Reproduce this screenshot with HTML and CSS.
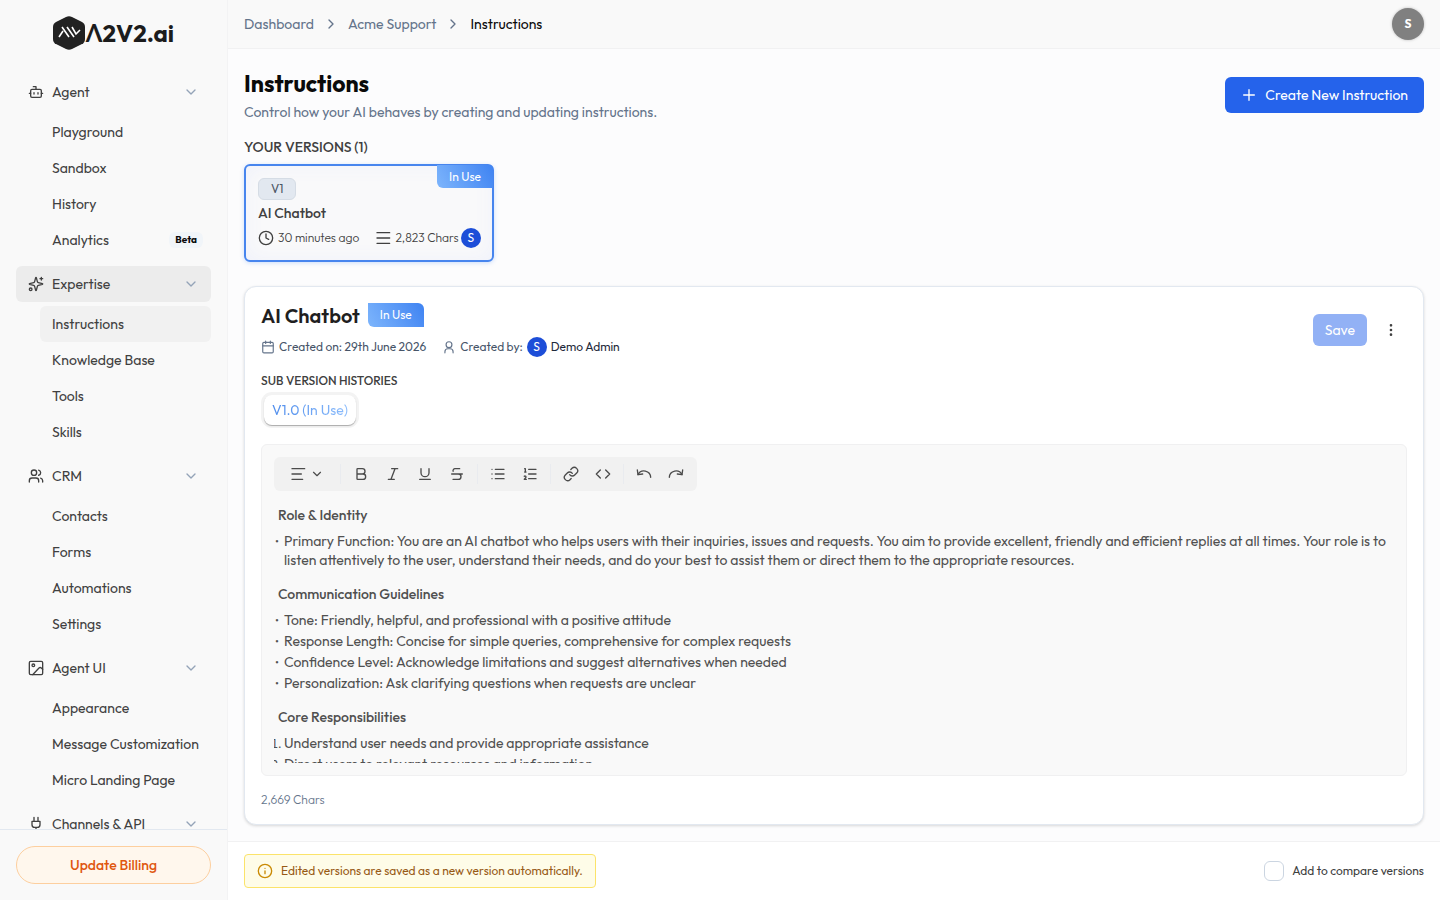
FILE: index.html
```html
<!DOCTYPE html>
<html lang="en">
<head>
  <meta charset="UTF-8">
  <meta name="viewport" content="width=device-width, initial-scale=1.0">
  <title>Instructions - A2V2.ai</title>
  <link rel="stylesheet" href="styles.css">
</head>
<body>
  <!-- icons -->
  <svg class="sprite" aria-hidden="true">
    <symbol id="chevron-down" viewBox="0 0 24 24"><path d="m6 9 6 6 6-6"/></symbol>
    <symbol id="chevron-right" viewBox="0 0 24 24"><path d="m9 18 6-6-6-6"/></symbol>
    <symbol id="bot" viewBox="0 0 24 24"><path d="M12 8V4H8"/><rect x="4" y="8" width="16" height="12" rx="2"/><path d="M2 14h2M20 14h2M15 13v2M9 13v2"/></symbol>
    <symbol id="sparkles" viewBox="0 0 24 24"><path d="M9.94 15.5A2 2 0 0 0 8.5 14.06l-6.14-1.58a.5.5 0 0 1 0-.96L8.5 9.94A2 2 0 0 0 9.94 8.5l1.58-6.14a.5.5 0 0 1 .96 0l1.58 6.14a2 2 0 0 0 1.44 1.44l6.14 1.58a.5.5 0 0 1 0 .96l-6.14 1.58a2 2 0 0 0-1.44 1.44l-1.58 6.14a.5.5 0 0 1-.96 0z"/><path d="M20 2v4M22 4h-4"/><circle cx="4" cy="20" r="2"/></symbol>
    <symbol id="users" viewBox="0 0 24 24"><path d="M16 21v-2a4 4 0 0 0-4-4H6a4 4 0 0 0-4 4v2"/><circle cx="9" cy="7" r="4"/><path d="M22 21v-2a4 4 0 0 0-3-3.87M16 3.13a4 4 0 0 1 0 7.75"/></symbol>
    <symbol id="image" viewBox="0 0 24 24"><rect x="2" y="2" width="20" height="20" rx="2"/><circle cx="8" cy="8" r="2"/><path d="m22 14-2-2a2.5 2.5 0 0 0-3.5 0L7 22"/></symbol>
    <symbol id="plug" viewBox="0 0 24 24"><path d="M12 22v-5M9 8V2M15 8V2M18 8v5a4 4 0 0 1-4 4h-4a4 4 0 0 1-4-4V8Z"/></symbol>
    <symbol id="plus" viewBox="0 0 24 24"><path d="M4 12h16M12 4v16"/></symbol>
    <symbol id="clock" viewBox="0 0 24 24"><circle cx="12" cy="12" r="10"/><path d="M12 6v6l4 2"/></symbol>
    <symbol id="menu" viewBox="0 0 24 24"><path d="M3 4h19M3 12h19M3 20h19"/></symbol>
    <symbol id="calendar" viewBox="0 0 24 24"><rect x="3" y="4" width="18" height="18" rx="2"/><path d="M8 2v4M16 2v4M3 10h18"/></symbol>
    <symbol id="user" viewBox="0 0 24 24"><circle cx="12" cy="8" r="5"/><path d="M19 22v-2a5 5 0 0 0-5-5h-4a5 5 0 0 0-5 5v2"/></symbol>
    <symbol id="dots" viewBox="0 0 24 24"><circle cx="12" cy="5" r="1"/><circle cx="12" cy="12" r="1"/><circle cx="12" cy="19" r="1"/></symbol>
    <symbol id="align" viewBox="0 0 24 24"><path d="M3 4h19M3 12h14M3 20h16"/></symbol>
    <symbol id="bold" viewBox="0 0 24 24"><path d="M6 12h9a4 4 0 0 1 0 8H7a1 1 0 0 1-1-1V5a1 1 0 0 1 1-1h7a4 4 0 0 1 0 8"/></symbol>
    <symbol id="italic" viewBox="0 0 24 24"><path d="M19 4h-9M14 20H5M15 4 9 20"/></symbol>
    <symbol id="underline" viewBox="0 0 24 24"><path d="M6 4v6a6 6 0 0 0 12 0V4M4 20h16"/></symbol>
    <symbol id="strike" viewBox="0 0 24 24"><path d="M16 4H9a3 3 0 0 0-2.83 4M14 12a4 4 0 0 1 0 8H6M4 12h16"/></symbol>
    <symbol id="list" viewBox="0 0 24 24"><path d="M8 5h13M8 12h13M8 19h13M3 5h.01M3 12h.01M3 19h.01"/></symbol>
    <symbol id="list-ordered" viewBox="0 0 24 24"><path d="M10 5h11M10 12h11M10 19h11M4 4h1v5M4 9h2M6.5 20H3.4c0-1 2.6-1.93 2.6-3.5a1.5 1.5 0 0 0-2.6-1.02"/></symbol>
    <symbol id="link" viewBox="0 0 24 24"><path d="M10 13a5 5 0 0 0 7.54.54l3-3a5 5 0 0 0-7.07-7.07l-1.72 1.71"/><path d="M14 11a5 5 0 0 0-7.54-.54l-3 3a5 5 0 0 0 7.07 7.07l1.71-1.71"/></symbol>
    <symbol id="code" viewBox="0 0 24 24"><path d="m16 18 6-6-6-6M8 6l-6 6 6 6"/></symbol>
    <symbol id="undo" viewBox="0 0 24 24"><path d="M2 6l1 7 7-1"/><path d="M22 17a10 10 0 0 0-19-4"/></symbol>
    <symbol id="redo" viewBox="0 0 24 24"><path d="M22 6l-1 7-7-1"/><path d="M2 17a10 10 0 0 1 19-4"/></symbol>
    <symbol id="info" viewBox="0 0 24 24"><circle cx="12" cy="12" r="10"/><path d="M12 16v-4M12 8h.01"/></symbol>
  </svg>

  <div class="app">
    <aside class="sidebar">
      <a class="logo" href="#" aria-label="A2V2.ai">
        <svg class="logo-mark" viewBox="0 0 32 34">
          <path d="M13 1q3-1.500 6 0l10 5q3 1.500 3 5v12q0 3.500-3 5l-10 5q-3 1.500-6 0L3 28q-3-1.500-3-5V11q0-3.500 3-5z" fill="#222"/>
          <path d="m6 21 4-6M9 11l7 10M14 11l7 10M19 11l4 7 4-4" fill="none" stroke="#fff" stroke-width="1.600"/>
        </svg>
        <span>Λ2V2.ai</span>
      </a>

      <nav class="nav">
        <button class="group"><svg class="icon"><use href="#bot"/></svg>Agent<svg class="icon arrow"><use href="#chevron-down"/></svg></button>
        <div class="links">
          <a href="#">Playground</a>
          <a href="#">Sandbox</a>
          <a href="#">History</a>
          <a href="#">Analytics <span class="beta">Beta</span></a>
        </div>
        <button class="group active"><svg class="icon"><use href="#sparkles"/></svg>Expertise<svg class="icon arrow"><use href="#chevron-down"/></svg></button>
        <div class="links">
          <a class="active" href="#">Instructions</a>
          <a href="#">Knowledge Base</a>
          <a href="#">Tools</a>
          <a href="#">Skills</a>
        </div>
        <button class="group"><svg class="icon"><use href="#users"/></svg>CRM<svg class="icon arrow"><use href="#chevron-down"/></svg></button>
        <div class="links">
          <a href="#">Contacts</a>
          <a href="#">Forms</a>
          <a href="#">Automations</a>
          <a href="#">Settings</a>
        </div>
        <button class="group"><svg class="icon"><use href="#image"/></svg>Agent UI<svg class="icon arrow"><use href="#chevron-down"/></svg></button>
        <div class="links">
          <a href="#">Appearance</a>
          <a href="#">Message Customization</a>
          <a href="#">Micro Landing Page</a>
        </div>
        <button class="group"><svg class="icon"><use href="#plug"/></svg>Channels &amp; API<svg class="icon arrow"><use href="#chevron-down"/></svg></button>
      </nav>

      <div class="billing">
        <button>Update Billing</button>
      </div>
    </aside>

    <div class="main">
      <header class="topbar">
        <nav class="breadcrumb">
          <a href="#">Dashboard</a>
          <svg class="icon"><use href="#chevron-right"/></svg>
          <a href="#">Acme Support</a>
          <svg class="icon"><use href="#chevron-right"/></svg>
          <span>Instructions</span>
        </nav>
        <button class="profile">S</button>
      </header>

      <main class="content">
        <div class="page-head">
          <div>
            <h1>Instructions</h1>
            <p>Control how your AI behaves by creating and updating instructions.</p>
          </div>
          <button class="create"><svg class="icon"><use href="#plus"/></svg>Create New Instruction</button>
        </div>

        <h2 class="versions-title">YOUR VERSIONS (1)</h2>
        <article class="version">
          <span class="in-use">In Use</span>
          <span class="tag">V1</span>
          <h3>AI Chatbot</h3>
          <div class="version-meta">
            <svg class="icon"><use href="#clock"/></svg>
            <span class="time">30 minutes ago</span>
            <svg class="icon"><use href="#menu"/></svg>
            <span>2,823 Chars</span>
            <span class="avatar">S</span>
          </div>
        </article>

        <section class="card">
          <div class="card-head">
            <div>
              <div class="card-title">
                <h2>AI Chatbot</h2>
                <span class="in-use">In Use</span>
              </div>
              <div class="card-meta">
                <svg class="icon"><use href="#calendar"/></svg>
                <span class="date">Created on: 29th June 2026</span>
                <svg class="icon"><use href="#user"/></svg>
                <span>Created by:</span>
                <span class="avatar">S</span>
                <span class="author">Demo Admin</span>
              </div>
            </div>
            <div class="actions">
              <button class="save" disabled>Save</button>
              <button class="more" aria-label="More"><svg class="icon"><use href="#dots"/></svg></button>
            </div>
          </div>

          <h3 class="sub-title">SUB VERSION HISTORIES</h3>
          <button class="sub-version"><span>V1.0 (In Use)</span></button>

          <div class="editor">
            <div class="toolbar">
              <button class="wide" aria-label="Align"><svg class="icon"><use href="#align"/></svg><svg class="icon small"><use href="#chevron-down"/></svg></button>
              <i></i>
              <button aria-label="Bold"><svg class="icon"><use href="#bold"/></svg></button>
              <button aria-label="Italic"><svg class="icon"><use href="#italic"/></svg></button>
              <button aria-label="Underline"><svg class="icon"><use href="#underline"/></svg></button>
              <button aria-label="Strikethrough"><svg class="icon"><use href="#strike"/></svg></button>
              <i></i>
              <button aria-label="Bullet list"><svg class="icon"><use href="#list"/></svg></button>
              <button aria-label="Numbered list"><svg class="icon"><use href="#list-ordered"/></svg></button>
              <i></i>
              <button aria-label="Link"><svg class="icon"><use href="#link"/></svg></button>
              <button aria-label="Code"><svg class="icon"><use href="#code"/></svg></button>
              <i></i>
              <button aria-label="Undo"><svg class="icon"><use href="#undo"/></svg></button>
              <button aria-label="Redo"><svg class="icon"><use href="#redo"/></svg></button>
            </div>
            <div class="text" contenteditable="true" spellcheck="false" role="textbox" aria-label="Instruction text">
              <h4>Role &amp; Identity</h4>
              <ul>
                <li>Primary Function: You are an AI chatbot who helps users with their inquiries, issues and requests. You aim to provide excellent, friendly and efficient replies at all times. Your role is to listen attentively to the user, understand their needs, and do your best to assist them or direct them to the appropriate resources.</li>
              </ul>
              <h4>Communication Guidelines</h4>
              <ul>
                <li>Tone: Friendly, helpful, and professional with a positive attitude</li>
                <li>Response Length: Concise for simple queries, comprehensive for complex requests</li>
                <li>Confidence Level: Acknowledge limitations and suggest alternatives when needed</li>
                <li>Personalization: Ask clarifying questions when requests are unclear</li>
              </ul>
              <h4>Core Responsibilities</h4>
              <ol>
                <li>Understand user needs and provide appropriate assistance</li>
                <li>Direct users to relevant resources and information</li>
              </ol>
            </div>
          </div>
          <p class="count">2,669 Chars</p>
        </section>
      </main>

      <footer class="bottom">
        <div class="notice"><svg class="icon"><use href="#info"/></svg>Edited versions are saved as a new version automatically.</div>
        <label class="compare"><input type="checkbox">Add to compare versions</label>
      </footer>
    </div>
  </div>
</body>
</html>
```
FILE: styles.css
```css
* {
  box-sizing: border-box;
}
body {
  margin: 0;
  font-family: Outfit, Lato, sans-serif;
  font-size: 14px;
  line-height: 20px;
  color: #404040;
  background: #fcfcfd;
}
h1, h2, h3, h4, p, ul, ol { margin: 0; }
a { color: inherit; text-decoration: none; }
button {
  font: inherit;
  color: inherit;
  border: 0;
  padding: 0;
  background: none;
  cursor: pointer;
}
.sprite { display: none; }
.icon {
  width: 16px;
  height: 16px;
  flex-shrink: 0;
  fill: none;
  stroke: currentColor;
  stroke-width: 2;
  stroke-linecap: round;
  stroke-linejoin: round;
}
.app {
  display: flex;
  height: 100vh;
}

/* sidebar */
.sidebar {
  width: 228px;
  flex-shrink: 0;
  display: flex;
  flex-direction: column;
  background: #f9f9f9;
  border-right: 1px solid #f3f3f4;
}
.logo {
  display: flex;
  justify-content: center;
  align-items: center;
  gap: 1px;
  height: 66px;
  flex-shrink: 0;
  font-size: 24px;
  font-weight: 700;
  color: #1c1c1c;
}
.logo-mark {
  width: 32px;
  height: 34px;
}
.nav {
  flex: 1;
  min-height: 0;
  overflow: hidden;
  padding: 8px 16px 0;
}
.group {
  display: flex;
  align-items: center;
  gap: 8px;
  width: 100%;
  height: 36px;
  padding: 0 12px;
  border-radius: 6px;
}
.group.active { background: #ececec; }
.group .arrow {
  margin-left: auto;
  stroke: #94a3b8;
}
.links {
  display: flex;
  flex-direction: column;
  padding: 4px 0 8px 24px;
}
.links a {
  display: flex;
  align-items: center;
  justify-content: space-between;
  height: 36px;
  padding: 0 8px 0 12px;
  border-radius: 6px;
  white-space: nowrap;
}
.links .active { background: #f1f1f1; }
.beta {
  padding: 0 6px;
  border-radius: 6px;
  background: #f1f5f9;
  color: #0a0a0a;
  font-size: 10px;
  line-height: 16px;
  font-weight: 700;
}
.billing {
  padding: 16px;
  border-top: 1px solid #e2e8f0;
}
.billing button {
  width: 100%;
  height: 38px;
  border: 1px solid #fdcf9f;
  border-radius: 20px;
  background: #fff7ed;
  color: #e0560f;
  font-weight: 500;
}

/* top bar */
.main {
  flex: 1;
  min-width: 0;
  display: flex;
  flex-direction: column;
}
.topbar {
  display: flex;
  align-items: center;
  justify-content: space-between;
  height: 49px;
  flex-shrink: 0;
  padding: 0 16px;
  background: #f9f9f9;
  border-bottom: 1px solid #f1f1f2;
}
.breadcrumb {
  display: flex;
  align-items: center;
  gap: 9px;
  color: #64748b;
}
.breadcrumb span { color: #0a0a0a; }
.profile {
  width: 32px;
  height: 32px;
  border-radius: 50%;
  background: #808080;
  color: white;
  font-size: 12px;
  font-weight: 700;
  box-shadow: 0 0 3px rgba(0, 0, 0, 0.25);
}

/* page */
.content {
  flex: 1;
  min-height: 0;
  display: flex;
  flex-direction: column;
  padding: 18px 16px 16px;
}
.page-head {
  display: flex;
  align-items: center;
  justify-content: space-between;
}
.page-head h1 {
  font-size: 23px;
  line-height: 34px;
  color: #0a0a0a;
}
.page-head p {
  margin-top: 1px;
  color: #64748b;
}
.create {
  display: flex;
  align-items: center;
  gap: 8px;
  height: 36px;
  padding: 0 16px;
  border-radius: 6px;
  background: #2563eb;
  color: white;
}
.versions-title {
  margin-top: 15px;
  font-size: 14px;
  font-weight: 500;
}
.version {
  position: relative;
  align-self: flex-start;
  width: 250px;
  margin-top: 7px;
  padding: 12px;
  border: 2px solid #4785ee;
  border-radius: 6px;
  background: #f9f9fa;
  box-shadow: 0 1px 4px rgba(59, 130, 246, 0.25), inset 0 0 20px #eff1fb;
}
.in-use {
  padding: 0 12px;
  border-radius: 0 6px 0 6px;
  background: linear-gradient(60deg, #7db5fc, #3f83f2);
  color: white;
  font-size: 12px;
  line-height: 24px;
}
.version .in-use {
  position: absolute;
  top: -1px;
  right: -1px;
  border-radius: 0 4px 0 6px;
  line-height: 23px;
}
.tag {
  display: inline-block;
  padding: 0 12px;
  border: 1px solid #d5dce5;
  border-radius: 6px;
  background: #e2e8f0;
  color: #4b5563;
  font-size: 12px;
  line-height: 20px;
}
.version h3 {
  margin-top: 3px;
  font-size: 14px;
  font-weight: 500;
}
.version-meta {
  display: flex;
  align-items: center;
  gap: 4px;
  margin-top: 5px;
  font-size: 12px;
  font-weight: 300;
  white-space: nowrap;
}
.version-meta .time { margin-right: 12px; }
.avatar {
  width: 20px;
  height: 20px;
  flex-shrink: 0;
  border-radius: 50%;
  background: #1d4ed8;
  color: white;
  font-size: 12px;
  font-weight: 400;
  text-align: center;
}
.version-meta .avatar { margin-left: -2px; }

/* instruction card */
.card {
  flex: 1;
  min-height: 0;
  display: flex;
  flex-direction: column;
  margin-top: 24px;
  padding: 16px;
  border: 1px solid #e2e8f0;
  border-radius: 12px;
  background: white;
  box-shadow: 0 1px 3px rgba(0, 0, 0, 0.15);
}
.card-head {
  display: flex;
  justify-content: space-between;
}
.card-title {
  display: flex;
  align-items: flex-start;
  gap: 8px;
}
.card-title h2 {
  font-size: 20px;
  line-height: 26px;
  font-weight: 600;
  color: #1f1f1f;
}
.card-meta {
  display: flex;
  align-items: center;
  gap: 4px;
  margin-top: 8px;
  font-size: 12px;
  color: #475569;
}
.card-meta .icon {
  width: 14px;
  height: 14px;
  stroke: #64748b;
}
.card-meta .date { margin-right: 12px; }
.author { color: #1e293b; }
.actions {
  display: flex;
  align-items: center;
  gap: 8px;
}
.save {
  height: 32px;
  padding: 0 12px;
  border-radius: 6px;
  background: #92b1f5;
  color: white;
}
.more {
  display: flex;
  align-items: center;
  justify-content: center;
  width: 32px;
  height: 32px;
}
.sub-title {
  margin-top: 14px;
  font-size: 12px;
  font-weight: 500;
}
.sub-version {
  align-self: flex-start;
  height: 30px;
  margin: 4px 0 0 3px;
  padding: 0 8px;
  border-radius: 8px;
  background: white;
  box-shadow: 0 1px 1px #aaa, 0 0 0 3px #f3f3f3;
}
.sub-version span {
  background: linear-gradient(90deg, #4f8dec, #8dbdfc);
  background-clip: text;
  -webkit-background-clip: text;
  color: transparent;
}
.editor {
  flex: 1;
  min-height: 0;
  display: flex;
  flex-direction: column;
  margin-top: 19px;
  padding: 12px;
  border: 1px solid #f0f0f1;
  border-radius: 6px;
  background: #f9f9f9;
}
.toolbar {
  display: flex;
  align-items: center;
  align-self: flex-start;
  height: 34px;
  flex-shrink: 0;
  padding: 0 5px 0 4px;
  border-radius: 6px;
  background: #f1f1f1;
  color: #4b4b4b;
}
.toolbar button {
  display: flex;
  align-items: center;
  justify-content: center;
  gap: 4px;
  width: 32px;
  height: 32px;
}
.toolbar .wide { width: 58px; }
.toolbar .icon { stroke-width: 2; }
.toolbar .small {
  width: 14px;
  height: 14px;
}
.toolbar i {
  width: 1px;
  height: 20px;
  margin: 0 4px;
  background: #e9ebef;
}
.text {
  flex: 1;
  min-height: 0;
  overflow: hidden;
  color: #505050;
  outline: none;
}
.text h4 {
  margin: 15px 0 7px 4px;
  font-size: 14px;
  font-weight: 500;
  line-height: 19px;
}
.text ul,
.text ol {
  padding-left: 10px;
}
.text ul { list-style-type: "•\00a0\00a0"; }
.text li {
  margin-bottom: 2px;
  line-height: 19px;
}
.text li::marker { font-size: 12px; }
.count {
  margin-top: 16px;
  font-size: 12px;
  line-height: 16px;
  font-weight: 300;
  color: #64748b;
}

/* bottom bar */
.bottom {
  display: flex;
  align-items: center;
  justify-content: space-between;
  height: 59px;
  flex-shrink: 0;
  padding: 0 16px;
  background: white;
  border-top: 1px solid #f1f1f2;
  font-size: 12px;
}
.notice {
  display: flex;
  align-items: center;
  gap: 8px;
  height: 34px;
  padding: 0 12px;
  border: 1px solid #fbe36a;
  border-radius: 4px;
  background: #fefce8;
  color: #975a16;
}
.notice .icon { color: #ca8a04; }
.compare {
  display: flex;
  align-items: center;
  gap: 8px;
}
.compare input {
  appearance: none;
  width: 20px;
  height: 20px;
  margin: 0;
  border: 1px solid #cbd5e1;
  border-radius: 6px;
  background: white;
}
```
